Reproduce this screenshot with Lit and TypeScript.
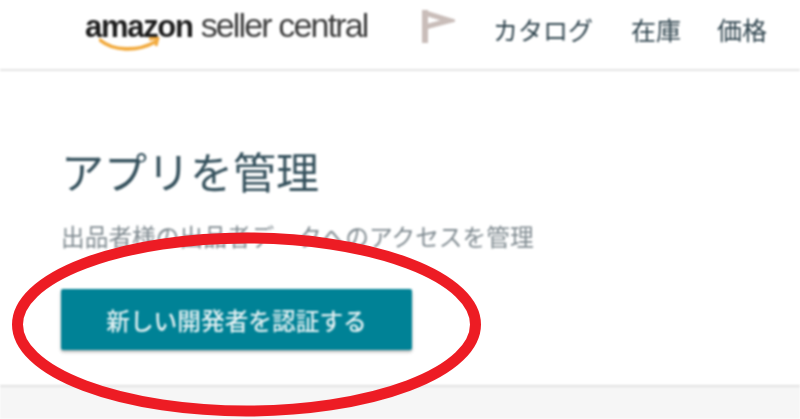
import { LitElement, html, css } from 'lit';
import { customElement } from 'lit/decorators.js';

const NAV_ITEMS = ['カタログ', '在庫', '価格'];

@customElement('app-root')
export class AppRoot extends LitElement {
  static styles = css`
    :host {
      display: block;
      position: relative;
      width: 800px;
      height: 419px;
      overflow: hidden;
      background: #ffffff;
      font-family: 'Noto Sans CJK JP', 'Liberation Sans', sans-serif;
    }
    * {
      box-sizing: border-box;
      margin: 0;
      padding: 0;
    }
    .page {
      display: flex;
      flex-direction: column;
      height: 419px;
      filter: blur(0.8px);
    }
    .header {
      display: flex;
      align-items: flex-start;
      height: 71px;
      flex: none;
      border-bottom: 2px solid #e4e4e4;
      padding-left: 85px;
    }
    .logo {
      position: relative;
      display: flex;
      align-items: baseline;
      flex: none;
      width: 284px;
      padding-top: 6px;
      font-family: 'Liberation Sans', sans-serif;
      line-height: 38px;
      white-space: nowrap;
    }
    .logo-amazon {
      font-size: 31px;
      font-weight: 700;
      letter-spacing: -1.3px;
      color: #1c1c1c;
    }
    .logo-seller {
      font-size: 34px;
      margin-left: 8px;
      letter-spacing: -1.85px;
      color: #3c3c3c;
    }
    .smile {
      position: absolute;
      left: 14px;
      top: 37px;
    }
    .flag {
      margin: 9px 0 0 52px;
      flex: none;
    }
    .nav {
      display: flex;
      gap: 38px;
      margin-left: 38px;
      padding-top: 10px;
      font-size: 25px;
      line-height: 38px;
      color: #2f444e;
    }
    .nav span:last-child {
      margin-left: -2px;
    }
    .content {
      flex: 1;
      padding: 69px 0 0 61px;
    }
    h1 {
      font-size: 43px;
      font-weight: 400;
      line-height: 60px;
      color: #34505c;
    }
    .sub {
      margin-top: 20px;
      font-size: 23.7px;
      font-weight: 400;
      line-height: 32px;
      color: #7f8a90;
    }
    .btn {
      display: flex;
      align-items: center;
      justify-content: center;
      width: 351px;
      height: 61px;
      margin-top: 37px;
      border: 0;
      border-radius: 2px;
      background: #008296;
      box-shadow: 0 2px 3px rgba(0, 0, 0, 0.3);
      color: #e4f1f3;
      font-family: inherit;
      font-size: 23.7px;
      font-weight: 500;
      line-height: 32px;
    }
    .footer {
      flex: none;
      height: 34px;
      background: #f6f6f6;
      border-top: 2px solid #e2e2e2;
    }
    .circle {
      position: absolute;
      left: 0;
      top: 0;
    }
  `;

  render() {
    return html`
      <div class="page">
        <div class="header">
          <div class="logo">
            <span class="logo-amazon">amazon</span>
            <span class="logo-seller">seller central</span>
            <svg class="smile" width="64" height="18" viewBox="0 0 64 18">
              <path d="M1 3 C14 14 38 15 56 5" fill="none" stroke="#f2a93b" stroke-width="3.6" stroke-linecap="round" />
              <path d="M50 2 L59 1 L57 9" fill="none" stroke="#f2a93b" stroke-width="2.8" />
            </svg>
          </div>
          <svg class="flag" width="34" height="36" viewBox="0 0 34 36">
            <path d="M4 1 V34" fill="none" stroke="#c9bdb9" stroke-width="6" />
            <path d="M4 4 L29 11.5 L4 18" fill="none" stroke="#c9bdb9" stroke-width="5" />
          </svg>
          <nav class="nav">
            ${NAV_ITEMS.map((item) => html`<span>${item}</span>`)}
          </nav>
        </div>
        <div class="content">
          <h1>アプリを管理</h1>
          <p class="sub">出品者様の出品者データへのアクセスを管理</p>
          <button class="btn">新しい開発者を認証する</button>
        </div>
        <div class="footer"></div>
      </div>
      <svg class="circle" width="800" height="419" viewBox="0 0 800 419">
        <ellipse cx="246.5" cy="324.5" rx="229" ry="86.5" fill="none" stroke="#ed1c24" stroke-width="11" />
      </svg>
    `;
  }
}
